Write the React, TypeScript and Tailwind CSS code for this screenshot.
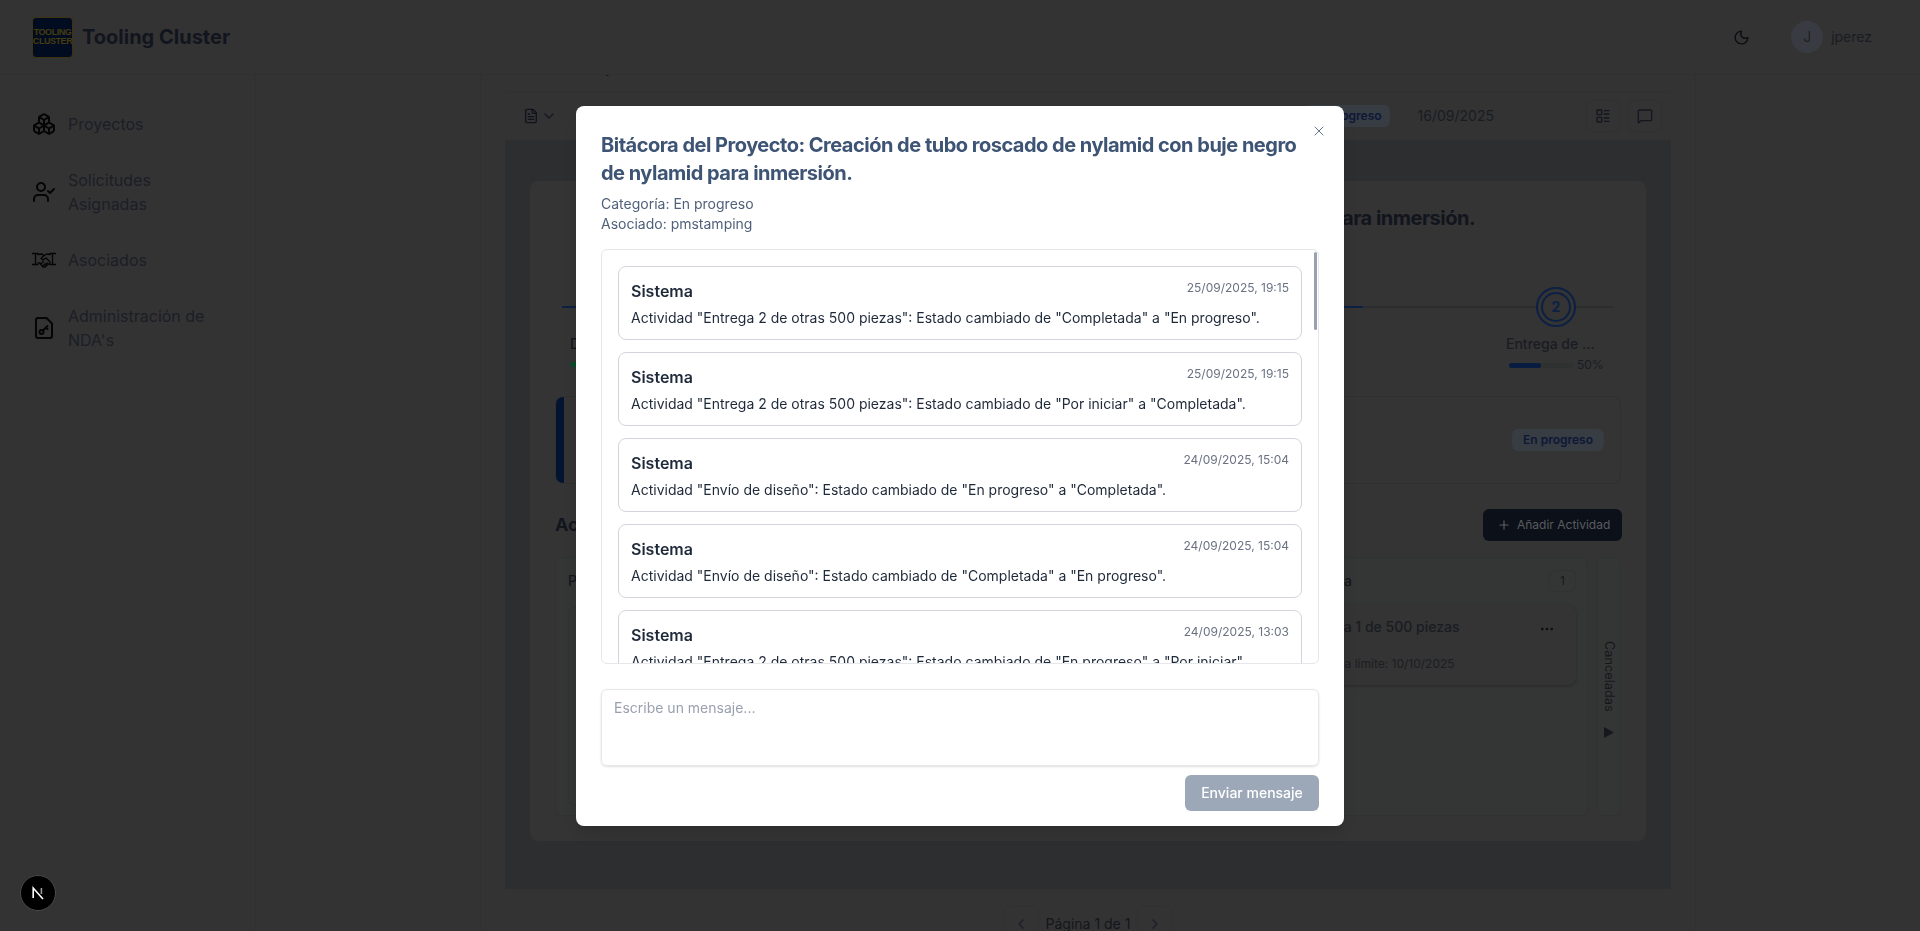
import { Boxes, UserCheck, Moon, FileText, ChevronDown, ChevronLeft, ChevronRight, LayoutList, MessageSquare, Plus, Ellipsis, X } from "lucide-react";

const logs = [
  { d: "25/09/2025, 19:15", m: 'Actividad "Entrega 2 de otras 500 piezas": Estado cambiado de "Completada" a "En progreso".' },
  { d: "25/09/2025, 19:15", m: 'Actividad "Entrega 2 de otras 500 piezas": Estado cambiado de "Por iniciar" a "Completada".' },
  { d: "24/09/2025, 15:04", m: 'Actividad "Envío de diseño": Estado cambiado de "En progreso" a "Completada".' },
  { d: "24/09/2025, 15:04", m: 'Actividad "Envío de diseño": Estado cambiado de "Completada" a "En progreso".' },
  { d: "24/09/2025, 13:03", m: 'Actividad "Entrega 2 de otras 500 piezas": Estado cambiado de "En progreso" a "Por iniciar".' },
];

function NavItem({ icon, children }: { icon: React.ReactNode; children: React.ReactNode }) {
  return (
    <div className="flex items-center gap-3 py-3 pl-8 pr-4">
      <div className="flex h-6 w-6 shrink-0 items-center justify-center text-[#050505]">{icon}</div>
      <span className="w-[150px] text-base leading-6 text-[#1c1e25]">{children}</span>
    </div>
  );
}

function HandshakeIcon() {
  return (
    <svg width="24" height="16" viewBox="0 0 24 16" fill="none" stroke="currentColor" strokeWidth="1.3" strokeLinecap="round" strokeLinejoin="round">
      <path d="M0 1.5H6M3.5 1.5V12.5M0 12.5H6" />
      <path d="M18 1.5H24M20.5 1.5V12.5M18 12.5H24" />
      <path d="M6 2.5L10 2L12 3.5L15 2L18 2.5" />
      <path d="M6 11H8L11 15H13L18 11" />
      <path d="M12 3.5L9 6.5L11 8L14 6L18 10" />
      <path d="M9.5 11.5L11.5 9.5M11.5 13.5L13.5 11.5M13.5 13L15.5 11" />
    </svg>
  );
}

export default function App() {
  return (
    <div className="relative flex h-[931px] flex-col overflow-hidden bg-[#333333] font-['Inter',sans-serif]">
      <header className="relative z-10 flex h-[75px] shrink-0 items-center border-b border-[#303030] bg-[#333333] pl-8 pr-[48px]">
        <div className="flex h-[41px] w-[41px] flex-col items-center justify-center rounded-sm border border-[#3f3210] bg-[#020c20] font-['Liberation_Sans',sans-serif] text-[9px] font-bold leading-[9px] tracking-tighter text-[#453c10]">
          <span>TOOLING</span>
          <span>CLUSTER</span>
        </div>
        <span className="ml-[9px] text-xl font-bold text-[#12151e]">Tooling Cluster</span>
        <Moon className="ml-auto h-[17px] w-[17px] text-[#0c0e14]" />
        <div className="ml-[41px] flex h-8 w-8 items-center justify-center rounded-full bg-[#383c42] text-sm text-[#1c1f25]">J</div>
        <span className="ml-2 text-sm text-[#1a1c22]">jperez</span>
      </header>

      <div className="flex min-h-0 flex-1">
        <aside className="w-[256px] shrink-0 border-r border-[#303030] pt-[25px]">
          <nav className="flex flex-col gap-2">
            <NavItem icon={<Boxes size={24} strokeWidth={2} />}>Proyectos</NavItem>
            <NavItem icon={<UserCheck size={24} strokeWidth={2} />}>Solicitudes Asignadas</NavItem>
            <NavItem icon={<HandshakeIcon />}>Asociados</NavItem>
            <NavItem
              icon={
                <svg width="24" height="24" viewBox="0 0 24 24" fill="none" stroke="currentColor" strokeWidth="2" strokeLinecap="round" strokeLinejoin="round">
                  <path d="M14.5 2H6a2 2 0 0 0-2 2v16a2 2 0 0 0 2 2h12a2 2 0 0 0 2-2V7.5z" />
                  <circle cx="9.5" cy="16" r="2" />
                  <path d="M11 14.5l4.5-4.5M14 11.5l1.5 1.5" />
                </svg>
              }
            >
              Administración de NDA's
            </NavItem>
          </nav>
        </aside>

        <main className="flex min-w-0 flex-1 justify-center overflow-hidden">
          <div className="-mt-[16px] h-[900px] w-[1216px] shrink-0 border-x border-[#303030] px-6">
            <div className="h-[32px] pl-[78px] text-sm leading-[17px] text-[#101218]">Proyecto</div>
            <div className="border-t border-[#303030]">
              <div className="flex h-12 items-center pl-[18px] pr-[9px]">
                <FileText size={16} className="text-[#10131c]" />
                <ChevronDown size={16} className="ml-[2px] text-[#15181f]" />
                <span className="ml-auto rounded-md bg-[#383c43] px-[8px] py-[3px] text-xs font-semibold text-[#0c1838]">En progreso</span>
                <span className="ml-[28px] mr-[92px] text-sm text-[#1a1c22]">16/09/2025</span>
                <button className="flex h-[32px] w-[34px] items-center justify-center rounded-md border border-[#303030]">
                  <LayoutList size={16} className="text-[#14171f]" />
                </button>
                <button className="ml-2 flex h-[32px] w-[34px] items-center justify-center rounded-md border border-[#303030]">
                  <MessageSquare size={16} className="text-[#14171f]" />
                </button>
              </div>

              <div className="h-[749px] bg-[#2d2e2f] px-[25px] pt-[41px]">
                <section className="h-[660px] rounded-lg bg-[#343434] px-[25px] pt-[23px]">
                  <h2 className="ml-[177px] text-xl font-bold leading-7 tracking-tight text-[#12151e]">Creación de tubo roscado de nylamid con buje negro de nylamid para inmersión.</h2>

                  <div className="relative mt-[55px] flex h-[109px] justify-between">
                    <div className="absolute left-[7px] right-[8px] top-[19px] h-[2px] bg-[#2c2d2e]" />
                    <div className="absolute left-[7px] top-[19px] h-[2px] w-[801px] bg-[#0c2044]" />
                    <div className="relative ml-[15px] w-[80px] pt-[49px]">
                      <div className="text-sm font-medium leading-4 text-[#14161c]">Diseño</div>
                      <div className="mt-[10px] h-[5px] w-[64px] rounded-full bg-[#0b4a2a]" />
                    </div>
                    <div className="relative mr-[19px] flex w-[96px] flex-col items-start">
                      <div className="ml-[30px] flex h-10 w-10 items-center justify-center rounded-full border-2 border-[#0c2044] bg-[#343434]">
                        <div className="flex h-[30px] w-[30px] items-center justify-center rounded-full border-2 border-[#0c2044] text-sm font-bold text-[#0c2044]">2</div>
                      </div>
                      <div className="mt-[9px] text-sm font-medium leading-4 text-[#1a1c22]">Entrega de ...</div>
                      <div className="mt-[5px] flex items-center gap-[4px] pl-[3px]">
                        <div className="h-[5px] w-[64px] rounded-full bg-[#2f3030]">
                          <div className="h-[5px] w-[32px] rounded-full bg-[#081c42]" />
                        </div>
                        <span className="text-xs text-[#1a1c22]">50%</span>
                      </div>
                    </div>
                  </div>

                  <div className="flex h-[88px] overflow-hidden rounded-lg border border-[#303030]">
                    <div className="w-2 bg-[#031430]" />
                    <div className="flex flex-1 items-center justify-end pr-[16px]">
                      <span className="rounded-md bg-[#383c43] px-[11px] py-[3px] text-xs font-semibold text-[#0c1838]">En progreso</span>
                    </div>
                  </div>

                  <div className="mt-[25px] flex h-8 items-center justify-between">
                    <h3 className="text-lg font-bold text-[#12151e]">Actividades</h3>
                    <button className="-mr-px flex h-8 w-[139px] items-center gap-[6px] rounded-md bg-[#0c1018] pl-[14px] text-xs font-normal text-[#5a5d61]">
                      <Plus size={14} />
                      Añadir Actividad
                    </button>
                  </div>

                  <div className="mt-4 flex h-[259px] gap-[9px]">
                    <div className="flex flex-1 rounded-md border border-[#303231] bg-[#343635]">
                      <div className="flex-1 pl-[12px] pt-[13px]">
                        <div className="text-sm font-medium text-[#14161c]">Por iniciar</div>
                        <div className="mt-[16px] h-[198px] w-[200px] rounded-md border border-dashed border-[#2f3130]" />
                      </div>
                      <div className="w-[321px] pr-[11px] pt-[12px]">
                        <div className="flex items-center justify-between">
                          <span className="pl-[5px] text-sm font-medium text-[#14161c]">Completada</span>
                          <span className="flex h-[22px] w-[27px] items-center justify-center rounded-md border border-[#303231] text-xs text-[#14161c]">1</span>
                        </div>
                        <div className="mt-[13px] h-[80px] rounded-lg bg-[#333433] pl-[34px] pr-[21px] pt-[12px] shadow-sm shadow-[#2a2b2b]">
                          <div className="flex items-center justify-between">
                            <span className="text-sm font-medium text-[#1a1c22]">Entrega 1 de 500 piezas</span>
                            <Ellipsis size={16} className="mt-1 text-[#0c0e14]" />
                          </div>
                          <div className="ml-[17px] mt-[19px] text-xs text-[#1c1e23]">Fecha límite: 10/10/2025</div>
                        </div>
                      </div>
                    </div>
                    <div className="flex w-[24px] flex-col items-center rounded-md border border-[#303231] bg-[#343635] pt-[83px]">
                      <span className="text-[12.75px] leading-4 text-[#14161c] [writing-mode:vertical-rl]">Canceladas</span>
                      <svg width="10" height="11" viewBox="0 0 10 11" className="mt-[15px] text-[#16181e]"><path d="M0 0 L10 5.5 L0 11 Z" fill="currentColor" /></svg>
                    </div>
                  </div>
                </section>
              </div>

              <div className="mt-[17px] flex items-center justify-center">
                <button className="flex h-9 w-9 items-center justify-center rounded-md border border-[#303030]"><ChevronLeft size={16} className="text-[#1c1e24]" /></button>
                <span className="mx-[7px] text-sm text-[#14161c]">Página 1 de 1</span>
                <button className="flex h-9 w-9 items-center justify-center rounded-md border border-[#303030]"><ChevronRight size={16} className="text-[#1c1e24]" /></button>
              </div>
            </div>
          </div>
        </main>
      </div>

      <div className="fixed bottom-5 left-5 z-50 flex h-9 w-9 items-center justify-center rounded-full border border-[#4a4a4a] bg-black">
        <svg width="16" height="16" viewBox="0 0 16 16" fill="none" stroke="#fff" strokeWidth="1.6">
          <path d="M3.2 13V3L13 14" />
          <path d="M11.4 3v6" stroke="#999" />
        </svg>
      </div>

      <div className="fixed inset-0 z-50 flex items-center justify-center">
        <div className="relative flex h-[720px] w-[768px] flex-col rounded-lg bg-white px-[25px] pb-[14px] pt-[25px] shadow-lg">
          <button className="absolute right-[17px] top-[17px] text-slate-500"><X size={16} strokeWidth={1.5} /></button>
          <h2 className="text-xl font-bold leading-7 tracking-tight text-[#3e5474]">Bitácora del Proyecto: Creación de tubo roscado de nylamid con buje negro de nylamid para inmersión.</h2>
          <div className="mt-[7px] text-sm leading-5 text-[#50617a]">
            <p>Categoría: En progreso</p>
            <p>Asociado: pmstamping</p>
          </div>
          <div className="relative mt-[15px] h-[415px] overflow-hidden rounded-md border border-gray-200 py-4 pl-4 pr-4">
            <div className="flex flex-col gap-3">
              {logs.map((l, i) => (
                <div key={i} className="shrink-0 rounded-lg border border-[#d4d4dd] px-3 pb-[11px] pt-[12px]">
                  <div className="flex items-start justify-between">
                    <span className="text-base font-semibold leading-6 text-gray-800">Sistema</span>
                    <span className="mt-px text-xs leading-[16px] text-gray-500">{l.d}</span>
                  </div>
                  <p className="mt-[5px] text-sm leading-5 text-gray-800">{l.m}</p>
                </div>
              ))}
            </div>
            <div className="absolute right-[1px] top-[2px] h-[78px] w-[3px] rounded-full bg-gray-400" />
          </div>
          <div className="mt-[25px] h-[77px] rounded-md border border-gray-200 px-3 py-[8px] text-sm leading-5 text-gray-400 shadow-sm">Escribe un mensaje...</div>
          <div className="mt-[9px] flex justify-end">
            <button className="flex h-9 w-[134px] items-center justify-center rounded-md bg-[#9ca8b8] text-sm font-medium text-white">Enviar mensaje</button>
          </div>
        </div>
      </div>
    </div>
  );
}
